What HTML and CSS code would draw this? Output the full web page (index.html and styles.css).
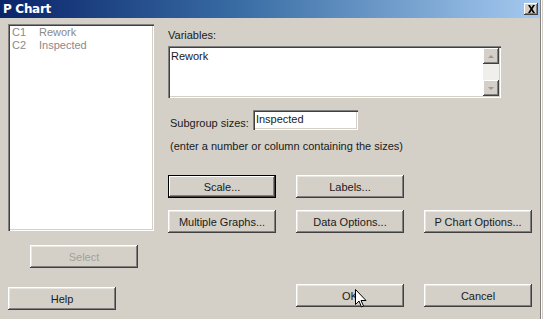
FILE: index.html
```html
<!DOCTYPE html>
<html lang="en">
  <head>
    <meta charset="utf-8">
    <title>P Chart</title>
    <link rel="stylesheet" href="styles.css">
  </head>
  <body>
    <div class="window">
      <div class="titlebar">
        <span class="title">P Chart</span>
        <span class="close">
          <svg width="9" height="8" viewBox="0 0 9 8"><path d="M1 0h2l1.5 2.5L6 0h2L5.5 4 8 8H6L4.5 5.5 3 8H1l2.5-4z" fill="#000"/></svg>
        </span>
      </div>
      <div class="content">
        <div class="left">
          <div class="listbox">
            <div class="item"><span class="col">C1</span>Rework</div>
            <div class="item"><span class="col">C2</span>Inspected</div>
          </div>
          <a class="button disabled select">Select</a>
          <a class="button help">Help</a>
        </div>
        <div class="right">
          <label class="varlabel">Variables:</label>
          <div class="textarea">
            <div class="textvalue">Rework</div>
            <div class="scrollbar">
              <span class="arrow up"></span>
              <span class="arrow down"></span>
            </div>
          </div>
          <div class="subgroup">
            <label>Subgroup sizes:</label>
            <div class="field">Inspected</div>
          </div>
          <p class="hint">(enter a number or column containing the sizes)</p>
          <div class="row row1">
            <a class="button default">Scale...</a>
            <a class="button">Labels...</a>
          </div>
          <div class="row row2">
            <a class="button">Multiple Graphs...</a>
            <a class="button">Data Options...</a>
            <a class="button">P Chart Options...</a>
          </div>
          <div class="row row3">
            <a class="button ok">OK
              <svg class="cursor" width="12" height="19" viewBox="0 0 12 19"><path d="M0.5 0.5v15l3.5-3.5 2.5 6 2-1-2.5-5.5h5z" fill="#fff" stroke="#000"/></svg>
            </a>
            <a class="button">Cancel</a>
          </div>
        </div>
      </div>
    </div>
  </body>
</html>
```
FILE: styles.css
```css
:root {
  --face: #d4d0c8;
  --shadow: #808080;
  --dark: #404040;
}

html, body {
  margin: 0;
  padding: 0;
  background: var(--face);
}
body {
  font-family: "Liberation Sans", Arial, sans-serif;
  font-size: 11px;
  color: #1a1a1a;
}
.window {
  width: 540px;
  height: 319px;
  background: var(--face);
  border-right: 1px solid var(--shadow);
  box-shadow: 1px 0 0 #ffffff;
  overflow: hidden;
}
.titlebar {
  height: 18px;
  background: linear-gradient(to right, #0a246a 0%, #3a6ea5 45%, #a6caf0 100%);
  display: flex;
  align-items: center;
  justify-content: space-between;
  padding: 0 2px 0 3px;
}
.title {
  color: #fff;
  font-weight: bold;
  font-size: 12px;
  font-family: "DejaVu Sans", Verdana, sans-serif;
  letter-spacing: -0.3px;
}
.close {
  width: 14px;
  height: 12px;
  background: var(--face);
  box-shadow: inset -1px -1px var(--dark), inset 1px 1px #fff, inset -2px -2px var(--shadow);
  display: flex;
  align-items: center;
  justify-content: center;
}
.content {
  display: flex;
  padding: 6px 0 0 8px;
}
.left {
  width: 146px;
  display: flex;
  flex-direction: column;
}
.listbox {
  height: 207px;
  background: #fff;
  box-shadow: inset 1px 1px var(--shadow), inset 2px 2px var(--dark), inset -1px -1px #fff, inset -2px -2px var(--face);
  padding: 2px 4px;
  box-sizing: border-box;
  color: #8a8a8a;
}
.item {
  height: 13px;
  line-height: 13px;
}
.col {
  display: inline-block;
  width: 27px;
}
.button {
  display: flex;
  align-items: center;
  justify-content: center;
  width: 108px;
  height: 23px;
  box-sizing: border-box;
  background: var(--face);
  box-shadow: inset -1px -1px var(--dark), inset 1px 1px #fff, inset -2px -2px var(--shadow), inset 2px 2px #e8e6e1;
  position: relative;
}
.button.default {
  box-shadow: inset 0 0 0 1px #000, inset -2px -2px var(--dark), inset 2px 2px #fff, inset -3px -3px var(--shadow);
}
.button.disabled {
  color: #a0a0a0;
}
.select {
  margin: 14px 0 0 22px;
}
.help {
  margin-top: 19px;
}
.right {
  margin-left: 14px;
  width: 364px;
}
.varlabel {
  display: block;
  margin-top: 5px;
  height: 17px;
}
.textarea {
  display: flex;
  width: 333px;
  height: 52px;
  background: #fff;
  box-shadow: inset 1px 1px var(--shadow), inset 2px 2px var(--dark), inset -1px -1px #fff, inset -2px -2px var(--face);
  padding: 2px;
  box-sizing: border-box;
}
.textvalue {
  flex: 1;
  padding: 2px 1px;
}
.scrollbar {
  width: 16px;
  background: #f0efec;
  display: flex;
  flex-direction: column;
  justify-content: space-between;
}
.arrow {
  height: 16px;
  background: var(--face);
  box-shadow: inset -1px -1px var(--dark), inset 1px 1px #fff, inset -2px -2px var(--shadow);
  display: flex;
  align-items: center;
  justify-content: center;
}
.arrow::after {
  content: "";
  border-left: 3px solid transparent;
  border-right: 3px solid transparent;
}
.arrow.up::after {
  border-bottom: 3px solid #9a9a9a;
}
.arrow.down::after {
  border-top: 3px solid #9a9a9a;
}
.subgroup {
  display: flex;
  align-items: center;
  margin-top: 12px;
}
.subgroup label {
  margin: 5px 4px 0 2px;
}
.field {
  width: 105px;
  height: 20px;
  box-sizing: border-box;
  background: #fff;
  box-shadow: inset 1px 1px var(--shadow), inset 2px 2px var(--dark), inset -1px -1px #fff, inset -2px -2px var(--face);
  padding: 3px 3px;
}
.hint {
  margin: 10px 0 0 2px;
}
.row {
  display: flex;
  gap: 20px;
}
.row1 {
  margin-top: 23px;
}
.row2 {
  margin-top: 12px;
}
.row3 {
  margin-top: 51px;
  padding-left: 128px;
}
.cursor {
  position: absolute;
  left: 59px;
  top: 5px;
}
```
